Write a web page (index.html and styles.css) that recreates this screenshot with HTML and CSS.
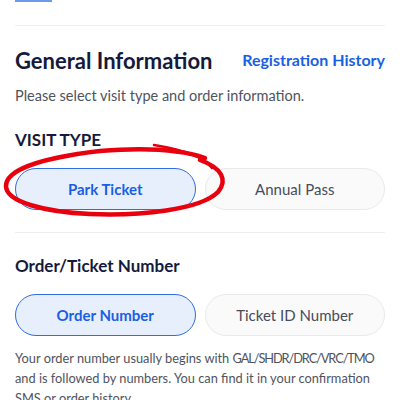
FILE: index.html
```html
<!DOCTYPE html>
<html>
<head>
<meta charset="utf-8">
<link rel="stylesheet" href="styles.css">
</head>
<body>
<div class="page">
  <div class="top-link"></div>
  <hr class="divider first">
  <div class="head-row">
    <h1 class="title">General Information</h1>
    <a class="history">Registration History</a>
  </div>
  <p class="sub">Please select visit type and order information.</p>
  <h2 class="label caps">VISIT TYPE</h2>
  <div class="choices">
    <div class="choice active">Park Ticket</div>
    <div class="choice">Annual Pass</div>
  </div>
  <hr class="divider second">
  <h2 class="label">Order/Ticket Number</h2>
  <div class="choices">
    <div class="choice active">Order Number</div>
    <div class="choice">Ticket ID Number</div>
  </div>
  <p class="note">Your order number usually begins with <span class="codes">GAL/SHDR/DRC/VRC/TMO</span><br>and is followed by numbers. You can find it in your confirmation<br>SMS or order history.</p>
</div>
<svg class="circle" width="400" height="400" viewBox="0 0 400 400">
  <path d="M154,145 C185,150 205,158 212,168" fill="none" stroke="#e8000e" stroke-width="2.5" stroke-linecap="round"/>
  <path d="M200,160 C222,168 228,180 218,192 C200,210 140,216 90,214 C45,212 6,202 6,186 C6,170 40,158 100,151 C150,147 185,151 205,158" fill="none" stroke="#e8000e" stroke-width="4.5" stroke-linecap="round"/>
</svg>
</body>
</html>
```
FILE: styles.css
```css
html, body {
  margin: 0;
  padding: 0;
  background: #ffffff;
}
body {
  font-family: Lato, "Noto Sans", sans-serif;
  position: relative;
  width: 400px;
  height: 400px;
  overflow: hidden;
}
.page {
  padding: 0 15px;
}
.top-link {
  width: 37px;
  height: 2px;
  background: #6b9aec;
}
.divider {
  border: 0;
  border-top: 1px solid #eeeff1;
  margin: 0;
}
.divider.first {
  margin-top: 23px;
}
.head-row {
  display: flex;
  justify-content: space-between;
  align-items: center;
  margin-top: 21px;
  height: 28px;
}
.title {
  margin: 0;
  font-size: 22px;
  font-weight: 700;
  color: #151a3b;
  line-height: 28px;
}
.history {
  font-size: 16px;
  font-weight: 700;
  color: #1a5fe3;
  margin-bottom: 3px;
}
.sub {
  margin: 11px 0 0;
  font-size: 14.5px;
  line-height: 20px;
  color: #4f535d;
}
.label {
  margin: 0;
  font-size: 17px;
  font-weight: 700;
  color: #151a3b;
  line-height: 22px;
}
.caps {
  margin-top: 23px;
}
.choices {
  display: grid;
  grid-template-columns: 1fr 1fr;
  gap: 9px;
  margin-top: 17px;
}
.choice {
  height: 40px;
  border: 1px solid #e9eaee;
  background: #fafafb;
  border-radius: 21px;
  display: flex;
  align-items: center;
  justify-content: center;
  font-size: 15px;
  color: #484b5a;
}
.choice.active {
  border-color: #2e6de2;
  background: #e7effd;
  color: #1a5fe3;
  font-weight: 700;
}
.divider.second {
  margin-top: 22px;
}
.divider.second + .label {
  margin-top: 22px;
}
.note {
  margin: 12px 0 0;
  font-size: 12.8px;
  line-height: 20px;
  color: #4f535d;
  white-space: nowrap;
}
.codes {
  letter-spacing: -1.1px;
}
.circle {
  position: absolute;
  left: 0;
  top: 0;
  pointer-events: none;
}
```
